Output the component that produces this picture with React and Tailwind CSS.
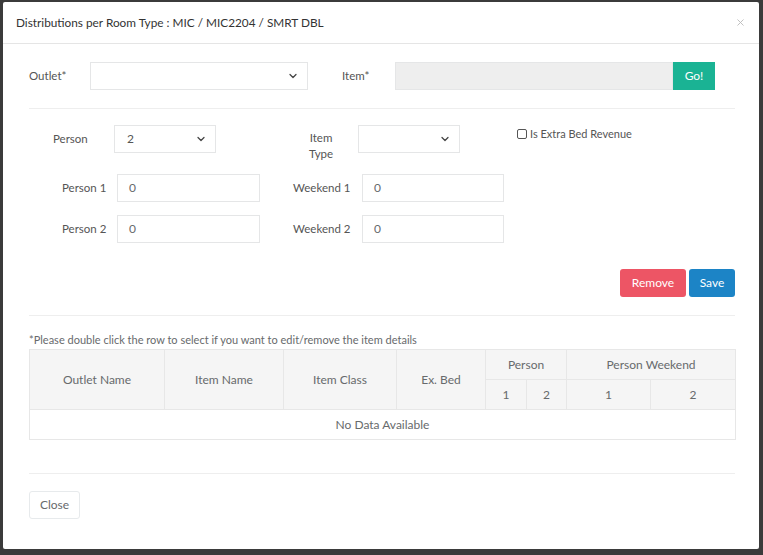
import { ChevronDown, X } from 'lucide-react';

// Select box with a small chevron on the right
function SelectBox({ value, className }) {
  return (
    <div className={`h-[28px] border border-[#e5e6e7] bg-white flex items-center justify-between pl-[12px] pr-[8px] text-[12px] text-[#555] ${className}`}>
      <span>{value}</span>
      <ChevronDown size={12} strokeWidth={2.5} className="text-[#444]" />
    </div>
  );
}

function TextBox({ value, className }) {
  return (
    <div className={`h-[28px] border border-[#e5e6e7] bg-white flex items-center pl-[11px] text-[12px] text-[#676a6c] ${className}`}>
      {value}
    </div>
  );
}

export default function App() {
  return (
    <div className="w-[763px] h-[555px] bg-[#3b3b3b] pt-[2px] pl-[3px] overflow-hidden font-['Lato',sans-serif] text-[11.5px] text-[#555]">
      <div className="w-[756px] h-[547px] bg-white rounded-[2px] flex flex-col">
        {/* Header */}
        <div className="h-[42px] border-b border-[#e5e5e5] flex items-center justify-between pl-[13px] pr-[13px] shrink-0">
          <h4 className="text-[11.8px] text-[#333]">Distributions per Room Type : MIC / MIC2204 / SMRT DBL</h4>
          <X size={11} className="text-[#bbb]" />
        </div>

        {/* Body */}
        <div className="pl-[26px] pr-[24px] pt-[18px] flex-1 flex flex-col">
          {/* Outlet / Item */}
          <div className="flex items-center h-[28px]">
            <span className="w-[61px]">Outlet*</span>
            <SelectBox value="" className="w-[218px]" />
            <span className="ml-[34px] w-[53px]">Item*</span>
            <div className="w-[278px] h-[28px] bg-[#eeeeee] border border-[#e5e6e7]"></div>
            <button className="w-[42px] h-[28px] bg-[#1ab394] text-white text-[12px]">Go!</button>
          </div>

          <div className="border-t border-[#eeeeee] mt-[18px]"></div>

          {/* Person / Item Type / Extra Bed */}
          <div className="flex items-start mt-[16px]">
            <span className="ml-[24px] w-[61px] h-[28px] flex items-center">Person</span>
            <SelectBox value="2" className="w-[102px]" />
            <div className="ml-[80px] w-[62px] pr-[12px] text-center leading-[16px] pt-[5px]">
              Item<br />Type
            </div>
            <SelectBox value="" className="w-[102px]" />
            <label className="ml-[57px] flex items-center gap-[3px] text-[11px] text-[#555] pt-[1px]">
              <span className="w-[10px] h-[10px] border border-[#555] rounded-[2px] inline-block"></span>
              <span>Is Extra Bed Revenue</span>
            </label>
          </div>

          {/* Person 1 / Weekend 1 */}
          <div className="flex items-center mt-[12px]">
            <span className="ml-[33px] w-[55px]">Person 1</span>
            <TextBox value="0" className="w-[143px]" />
            <span className="ml-[33px] w-[69px]">Weekend 1</span>
            <TextBox value="0" className="w-[142px]" />
          </div>

          {/* Person 2 / Weekend 2 */}
          <div className="flex items-center mt-[13px]">
            <span className="ml-[33px] w-[55px]">Person 2</span>
            <TextBox value="0" className="w-[143px]" />
            <span className="ml-[33px] w-[69px]">Weekend 2</span>
            <TextBox value="0" className="w-[142px]" />
          </div>

          {/* Actions */}
          <div className="flex justify-end gap-[3px] mt-[26px]">
            <button className="w-[66px] h-[28px] bg-[#ed5565] text-white text-[12px] rounded-[3px]">Remove</button>
            <button className="w-[46px] h-[28px] bg-[#1c84c6] text-white text-[12px] rounded-[3px]">Save</button>
          </div>

          <div className="border-t border-[#eeeeee] mt-[18px]"></div>

          <p className="text-[11px] text-[#676a6c] mt-[17px] leading-[14px]">
            *Please double click the row to select if you want to edit/remove the item details
          </p>

          {/* Table */}
          <table className="w-[706px] border-collapse text-[12px] text-[#676a6c] table-fixed mt-[2px]">
            <colgroup>
              <col className="w-[135px]" />
              <col className="w-[119px]" />
              <col className="w-[113px]" />
              <col className="w-[89px]" />
              <col className="w-[41px]" />
              <col className="w-[40px]" />
              <col className="w-[84px]" />
              <col className="w-[85px]" />
            </colgroup>
            <thead className="bg-[#f5f5f5]">
              <tr className="h-[30px]">
                <th rowSpan={2} className="border border-[#e7e7e7] font-normal">Outlet Name</th>
                <th rowSpan={2} className="border border-[#e7e7e7] font-normal">Item Name</th>
                <th rowSpan={2} className="border border-[#e7e7e7] font-normal">Item Class</th>
                <th rowSpan={2} className="border border-[#e7e7e7] font-normal">Ex. Bed</th>
                <th colSpan={2} className="border border-[#e7e7e7] font-normal">Person</th>
                <th colSpan={2} className="border border-[#e7e7e7] font-normal">Person Weekend</th>
              </tr>
              <tr className="h-[30px]">
                <th className="border border-[#e7e7e7] font-normal">1</th>
                <th className="border border-[#e7e7e7] font-normal">2</th>
                <th className="border border-[#e7e7e7] font-normal">1</th>
                <th className="border border-[#e7e7e7] font-normal">2</th>
              </tr>
            </thead>
            <tbody>
              <tr className="h-[30px]">
                <td colSpan={8} className="border border-[#e7e7e7] text-center">No Data Available</td>
              </tr>
            </tbody>
          </table>

          <div className="border-t border-[#eeeeee] mt-[33px]"></div>

          <div className="mt-[17px]">
            <button className="w-[51px] h-[28px] border border-[#e7eaec] rounded-[3px] bg-white text-[12px] text-[#676a6c]">Close</button>
          </div>
        </div>
      </div>
    </div>
  );
}
